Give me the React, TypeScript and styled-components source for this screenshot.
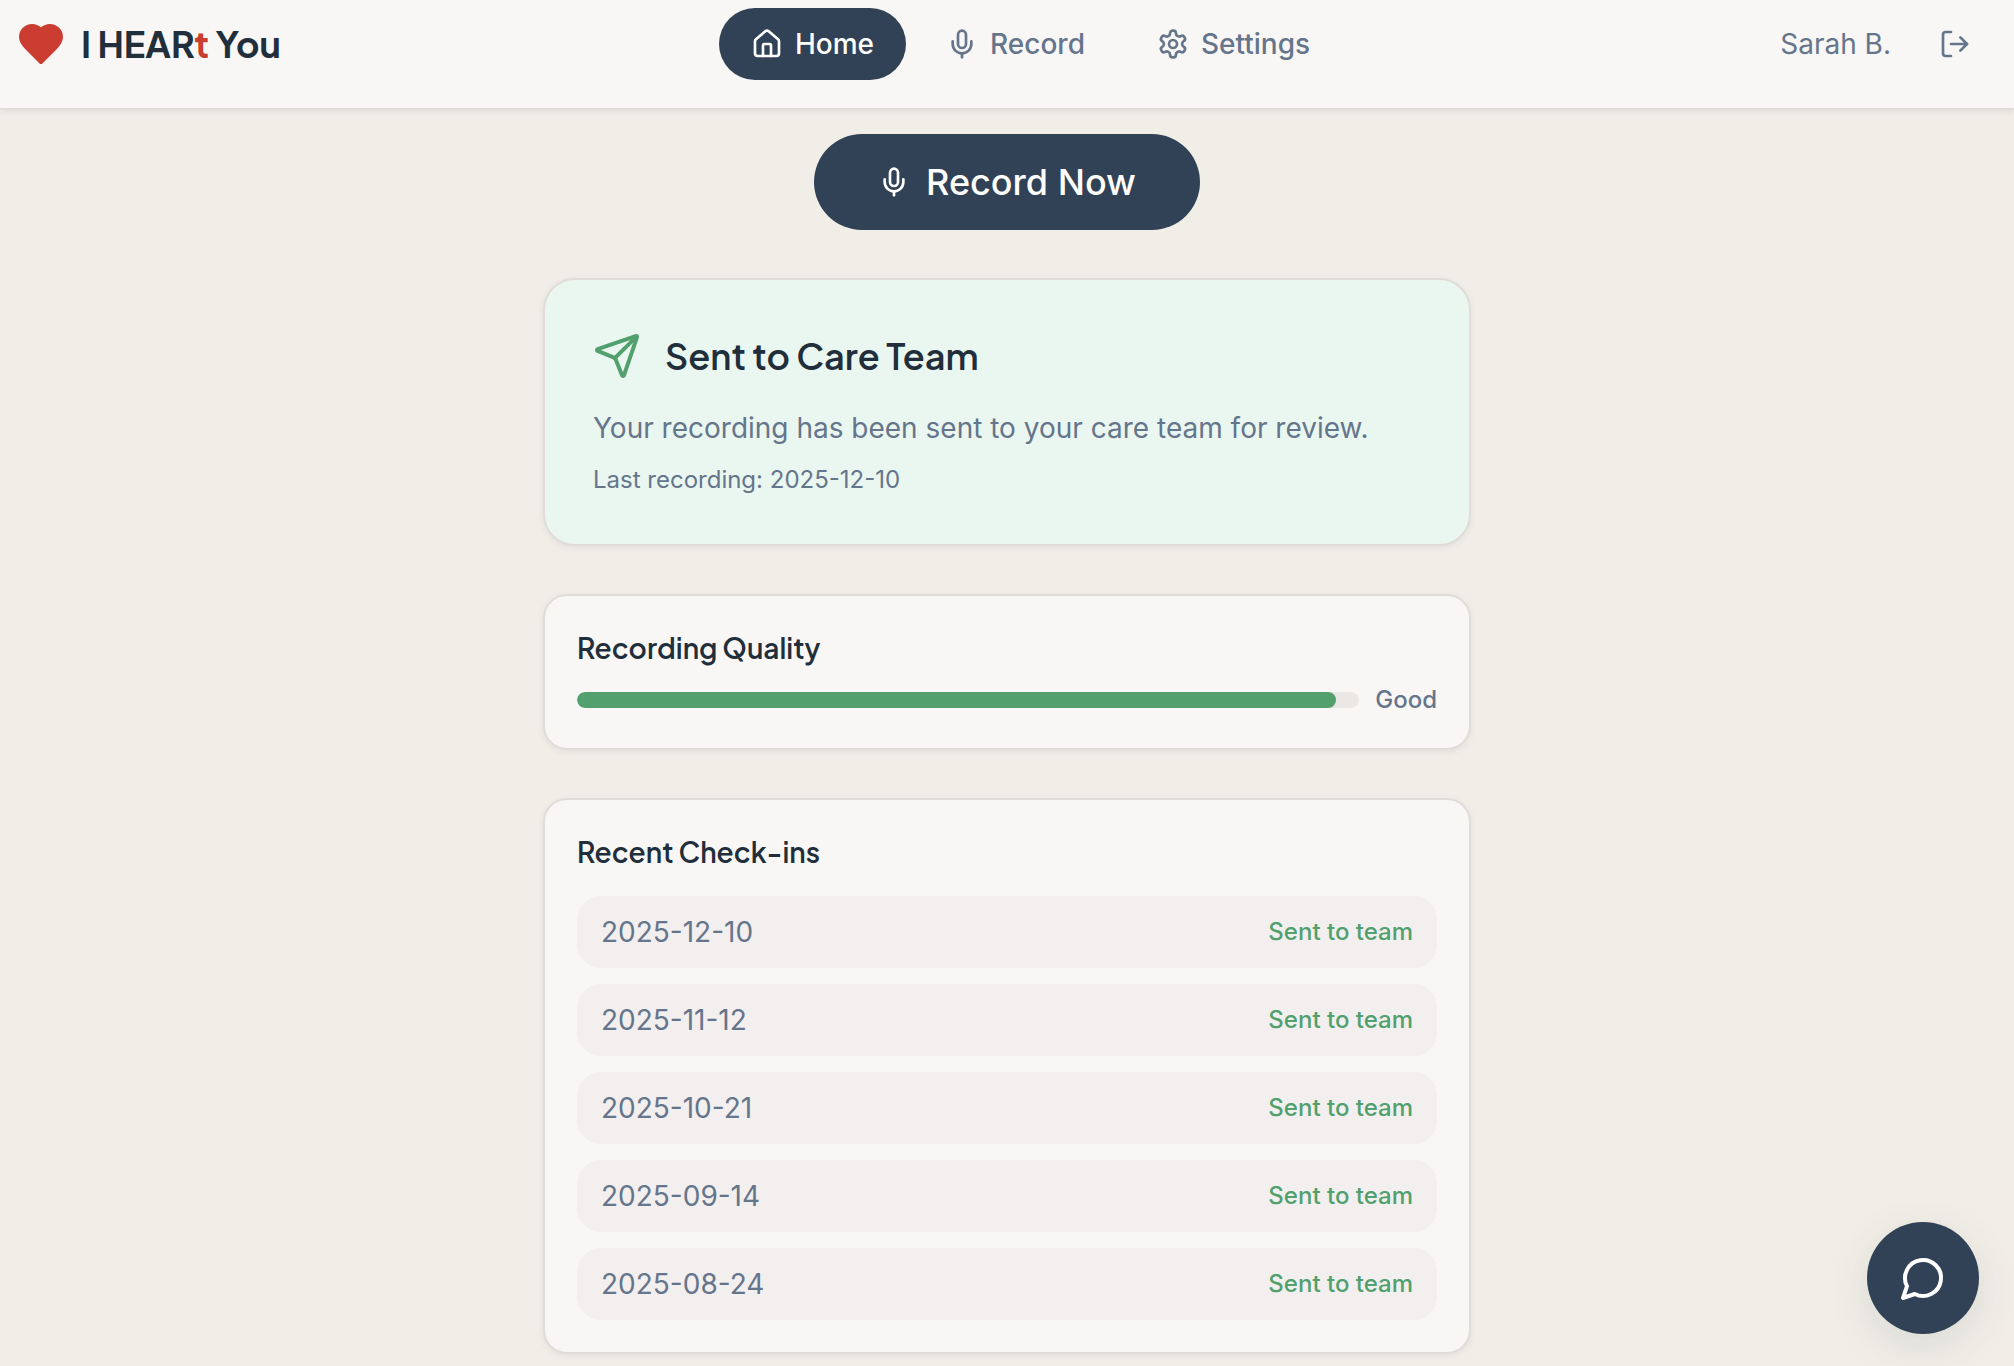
import React from "react";
import styled, { createGlobalStyle, css } from "styled-components";
import { House, LogOut, Mic, Send } from "lucide-react";

const color = {
  page: "#f1eee7",
  surface: "#f8f7f5",
  navy: "#314156",
  ink: "#212e3b",
  muted: "#65758b",
  green: "#52a06e",
  red: "#cb3d31",
  mint: "#eaf7f0",
  row: "#f2efee",
  track: "#ebe7e4",
  border: "#e2dcd9",
};

const GlobalStyle = createGlobalStyle`
  *, *::before, *::after { box-sizing: border-box; }
  body {
    margin: 0;
    min-height: 100vh;
    background: ${color.page};
    color: ${color.ink};
    font-family: Inter, "Liberation Sans", sans-serif;
    font-size: 28px;
    line-height: 40px;
    font-optical-sizing: none;
    -webkit-font-smoothing: antialiased;
  }
  h1, h2, p, ul { margin: 0; padding: 0; }
  button { font: inherit; border: 0; cursor: pointer; }
  svg { flex: none; display: block; }
`;

const headingFont = css`
  font-family: "Plus Jakarta Sans", Inter, "Liberation Sans", sans-serif;
  font-optical-sizing: auto;
  font-weight: 600;
`;

const Header = styled.header`
  display: flex;
  align-items: center;
  justify-content: space-between;
  padding: 8px 19px 28px 17px;
  background: ${color.surface};
  border-bottom: 2px solid ${color.border};
  box-shadow: 0 2px 6px rgba(49, 65, 86, 0.08);
`;

const Brand = styled.a`
  ${headingFont}
  display: flex;
  align-items: center;
  gap: 16px;
  font-size: 36px;
  font-weight: 700;
  color: ${color.ink};
  text-decoration: none;
`;

const Accent = styled.span`
  color: ${color.red};
`;

const Nav = styled.nav`
  display: flex;
  gap: 8px;
`;

const NavLink = styled.a<{ $active?: boolean }>`
  display: flex;
  align-items: center;
  gap: 12px;
  padding: 16px 32px;
  border-radius: 36px;
  font-weight: 500;
  text-decoration: none;
  color: ${(p) => (p.$active ? "#fff" : color.muted)};
  background: ${(p) => (p.$active ? color.navy : "transparent")};
`;

const Account = styled.div`
  display: flex;
  align-items: center;
  gap: 24px;
  color: ${color.muted};
`;

const IconButton = styled.button`
  padding: 20px 24px;
  background: transparent;
  color: inherit;
`;

const Main = styled.main`
  display: flex;
  flex-direction: column;
  align-items: center;
  gap: 48px;
  max-width: 928px;
  margin: 0 auto;
  padding: 24px 0 12px;
`;

const RecordButton = styled.button`
  display: flex;
  align-items: center;
  gap: 16px;
  padding: 24px 64px;
  border-radius: 48px;
  background: ${color.navy};
  color: #fff;
  font-size: 36px;
  font-weight: 500;
  line-height: 48px;
`;

const Card = styled.section<{ $highlight?: boolean }>`
  width: 100%;
  padding: ${(p) => (p.$highlight ? "48px" : "32px")};
  border: 2px solid ${color.border};
  border-radius: ${(p) => (p.$highlight ? "32px" : "24px")};
  background: ${(p) => (p.$highlight ? color.mint : color.surface)};
  box-shadow: 0 2px 6px rgba(49, 65, 86, 0.08);
`;

const StatusHeader = styled.div`
  display: flex;
  align-items: center;
  gap: 24px;
  margin-bottom: 24px;
  color: ${color.green};
`;

const StatusTitle = styled.h1`
  ${headingFont}
  font-size: 36px;
  line-height: 56px;
  color: ${color.ink};
`;

const CardTitle = styled.h2`
  ${headingFont}
  font-size: 28px;
  line-height: 40px;
`;

const StatusText = styled.p`
  color: ${color.muted};
`;

const StatusDate = styled.p`
  margin-top: 16px;
  font-size: 24px;
  line-height: 32px;
  color: ${color.muted};
`;

const QualityRow = styled.div`
  display: flex;
  align-items: center;
  gap: 16px;
  margin-top: 16px;
`;

const Track = styled.div`
  flex: 1;
  height: 16px;
  border-radius: 8px;
  background: ${color.track};
  overflow: hidden;
`;

const Fill = styled.div`
  height: 100%;
  border-radius: 8px;
  background: ${color.green};
`;

const SmallLabel = styled.span<{ $tone: "muted" | "green" }>`
  font-size: 24px;
  line-height: 32px;
  font-weight: 500;
  color: ${(p) => color[p.$tone]};
`;

const CheckInList = styled.ul`
  display: flex;
  flex-direction: column;
  gap: 16px;
  margin-top: 24px;
  list-style: none;
`;

const CheckIn = styled.li`
  display: flex;
  align-items: center;
  justify-content: space-between;
  padding: 16px 24px;
  border-radius: 24px;
  background: ${color.row};
  color: ${color.muted};
`;

const ChatButton = styled.button`
  position: fixed;
  right: 35px;
  bottom: 32px;
  display: flex;
  align-items: center;
  justify-content: center;
  width: 112px;
  height: 112px;
  border-radius: 50%;
  background: ${color.navy};
  color: #fff;
  box-shadow: 0 12px 40px rgba(49, 65, 86, 0.12);
`;

const Icon = ({ size, filled, children }: { size: number; filled?: boolean; children: React.ReactNode }) => (
  <svg
    width={size}
    height={size}
    viewBox="0 0 24 24"
    fill={filled ? color.red : "none"}
    stroke={filled ? color.red : "currentColor"}
    strokeWidth={2}
    strokeLinecap="round"
    strokeLinejoin="round"
    aria-hidden="true"
  >
    {children}
  </svg>
);

const checkIns = ["2025-12-10", "2025-11-12", "2025-10-21", "2025-09-14", "2025-08-24"];
const quality = 97;

export default function App() {
  return (
    <>
      <GlobalStyle />
      <Header>
        <Brand href="#home">
          <Icon size={48} filled>
            <path d="M19 14c1.49-1.46 3-3.21 3-5.5A5.5 5.5 0 0 0 16.5 3c-1.76 0-3 .5-4.5 2-1.5-1.5-2.74-2-4.5-2A5.5 5.5 0 0 0 2 8.5c0 2.3 1.5 4.05 3 5.5l7 7Z" />
          </Icon>
          <span>
            I HEAR<Accent>t</Accent> You
          </span>
        </Brand>
        <Nav aria-label="Main">
          <NavLink href="#home" $active aria-current="page">
            <House size={32} />
            Home
          </NavLink>
          <NavLink href="#record">
            <Mic size={32} />
            Record
          </NavLink>
          <NavLink href="#settings">
            <Icon size={32}>
              <path d="M12.22 2h-.44a2 2 0 0 0-2 2v.18a2 2 0 0 1-1 1.73l-.43.25a2 2 0 0 1-2 0l-.15-.08a2 2 0 0 0-2.73.73l-.22.38a2 2 0 0 0 .73 2.73l.15.1a2 2 0 0 1 1 1.72v.51a2 2 0 0 1-1 1.74l-.15.09a2 2 0 0 0-.73 2.73l.22.38a2 2 0 0 0 2.73.73l.15-.08a2 2 0 0 1 2 0l.43.25a2 2 0 0 1 1 1.73V20a2 2 0 0 0 2 2h.44a2 2 0 0 0 2-2v-.18a2 2 0 0 1 1-1.73l.43-.25a2 2 0 0 1 2 0l.15.08a2 2 0 0 0 2.73-.73l.22-.39a2 2 0 0 0-.73-2.73l-.15-.08a2 2 0 0 1-1-1.74v-.5a2 2 0 0 1 1-1.74l.15-.09a2 2 0 0 0 .73-2.73l-.22-.38a2 2 0 0 0-2.73-.73l-.15.08a2 2 0 0 1-2 0l-.43-.25a2 2 0 0 1-1-1.73V4a2 2 0 0 0-2-2z" />
              <circle cx="12" cy="12" r="3" />
            </Icon>
            Settings
          </NavLink>
        </Nav>
        <Account>
          <span>Sarah B.</span>
          <IconButton type="button" aria-label="Log out">
            <LogOut size={32} />
          </IconButton>
        </Account>
      </Header>

      <Main>
        <RecordButton type="button">
          <Mic size={32} />
          Record Now
        </RecordButton>

        <Card $highlight>
          <StatusHeader>
            <Send size={48} />
            <StatusTitle>Sent to Care Team</StatusTitle>
          </StatusHeader>
          <StatusText>Your recording has been sent to your care team for review.</StatusText>
          <StatusDate>Last recording: 2025-12-10</StatusDate>
        </Card>

        <Card>
          <CardTitle id="quality-title">Recording Quality</CardTitle>
          <QualityRow>
            <Track
              role="progressbar"
              aria-labelledby="quality-title"
              aria-valuemin={0}
              aria-valuemax={100}
              aria-valuenow={quality}
            >
              <Fill style={{ width: `${quality}%` }} />
            </Track>
            <SmallLabel $tone="muted">Good</SmallLabel>
          </QualityRow>
        </Card>

        <Card>
          <CardTitle>Recent Check-ins</CardTitle>
          <CheckInList>
            {checkIns.map((date) => (
              <CheckIn key={date}>
                <span>{date}</span>
                <SmallLabel $tone="green">Sent to team</SmallLabel>
              </CheckIn>
            ))}
          </CheckInList>
        </Card>
      </Main>

      <ChatButton type="button" aria-label="Open chat">
        <Icon size={48}>
          <path d="M7.9 20A9 9 0 1 0 4 16.1L2 22Z" />
        </Icon>
      </ChatButton>
    </>
  );
}
